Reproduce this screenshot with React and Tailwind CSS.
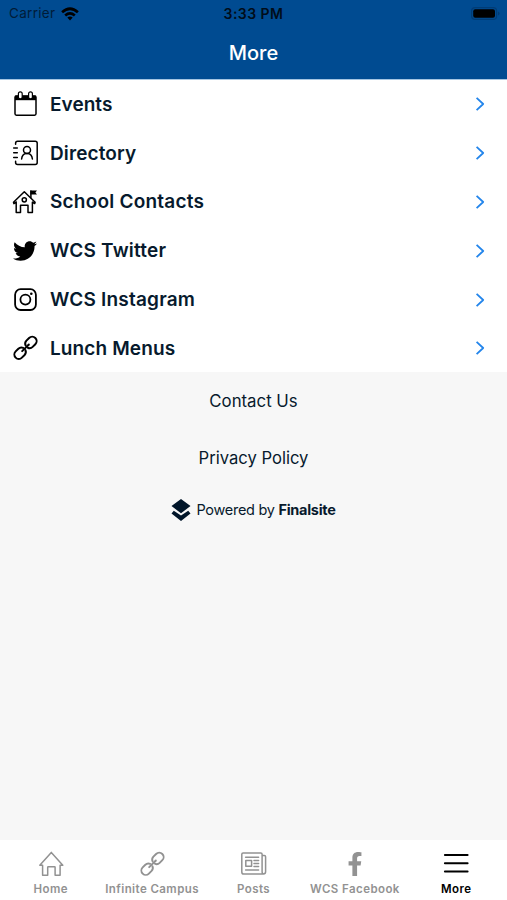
import React from "react";
import { FaTwitter, FaFacebookF } from "react-icons/fa";

const stroke = { fill: "none", stroke: "currentColor", strokeLinecap: "round", strokeLinejoin: "round" };

function CalendarIcon() {
  return (
    <svg className="h-6 w-6 overflow-visible" viewBox="0 0 24 24" {...stroke} strokeWidth="1.5">
      <path d="M2 3.6h21v4.6H2z" fill="currentColor" stroke="none" />
      <rect x="2" y="3.9" width="21" height="19.3" rx="1.4" />
      <rect x="5.4" y="-.2" width="3.8" height="7" rx="1.9" fill="white" strokeWidth="1.2" />
      <rect x="15.6" y="-.2" width="3.8" height="7" rx="1.9" fill="white" strokeWidth="1.2" />
    </svg>
  );
}

function DirectoryIcon() {
  return (
    <svg className="h-6 w-6 overflow-visible" viewBox="0 0 24 24" {...stroke} strokeWidth="1.5">
      <path d="M2.6 3.3V2.2Q2.6.2 4.6.2H22.2Q24.2.2 24.2 2.2V21.4Q24.2 23.4 22.2 23.4H4.6Q2.6 23.4 2.6 21.4V20.3" />
      <path d="M.7 7.1H4.3M.7 11.8H4.3M.7 16.5H4.3" />
      <circle cx="14" cy="9" r="3.5" />
      <path d="M8.6 18c.4-3.5 2-5.1 4.2-5.6h2.4c2.2.5 3.8 2.1 4.2 5.6" />
    </svg>
  );
}

function SchoolIcon() {
  return (
    <svg className="h-6 w-6 overflow-visible" viewBox="0 0 24 24" {...stroke} strokeWidth="1.5">
      <path d="M3.2 12.1.9 13.6.5 12.2 11.3 1.8 22.1 12.2 21.7 13.6 19.4 12.1V22.6H15V15.2H7.5V22.6H3.2V12.1" />
      <path d="M17.9 7.6V1" />
      <circle cx="11.3" cy="9.8" r="2.1" />
      <path d="M17.4.6H24L22.4 2.6 24 4.6H17.4z" fill="currentColor" stroke="none" />
    </svg>
  );
}

function InstagramIcon() {
  return (
    <svg className="h-6 w-6 overflow-visible" viewBox="0 0 24 24" {...stroke} strokeWidth="1.8">
      <rect x="2.1" y="1.2" width="20.8" height="20.8" rx="5.5" />
      <circle cx="12.4" cy="11.6" r="5" />
      <circle cx="18.3" cy="5.8" r="1.3" fill="currentColor" stroke="none" />
    </svg>
  );
}

function LinkIcon({ weight = 2 }) {
  return (
    <svg className="h-6 w-6 overflow-visible" viewBox="0 0 24 24" {...stroke} strokeWidth={weight}>
      <g transform="translate(.5 -.2) rotate(-45 12 12)">
        <path d="M10.3 13.6A4.4 4.4 0 0 1 6.3 16.4H2.5a4.4 4.4 0 0 1 0-8.8H6.3A4.4 4.4 0 0 1 10.3 10.4" />
        <path d="M13.7 10.4A4.4 4.4 0 0 1 17.7 7.6h3.8a4.4 4.4 0 0 1 0 8.8H17.7a4.4 4.4 0 0 1-4-2.8" />
        <path d="M7.3 12h9.4" />
      </g>
    </svg>
  );
}

function HomeIcon() {
  return (
    <svg className="h-6 w-6 overflow-visible" viewBox="0 0 24 24" {...stroke} strokeWidth="1.5">
      <path d="M3.6 13.2H.8L12.3.4 23.8 13.2H21.1V23.2H16.1V15.2Q16.1 14.7 15.6 14.7H9.2Q8.7 14.7 8.7 15.2V23.2H3.6z" />
    </svg>
  );
}

function PostsIcon() {
  return (
    <svg className="h-6 w-6 overflow-visible" viewBox="0 0 24 24" {...stroke} strokeWidth="1.5">
      <path d="M21.1 3.4V2.3Q21.1 1 19.8 1H2.1Q.8 1 .8 2.3V19.9Q.8 22 2.9 22H22.4Q24.6 22 24.6 19.8V4.7Q24.6 3.4 23.3 3.4H21.1V19.8Q21.1 22 22.6 22" />
      <rect x="4.8" y="8.6" width="5.8" height="5.6" />
      <path d="M4.6 5.2H17.6M13 8.5H17.6M13 11.5H17.6M13 14.5H17.6M4.6 17.9H17.6" />
    </svg>
  );
}

function MenuIcon() {
  return (
    <svg className="h-6 w-6 overflow-visible" viewBox="0 0 24 24" {...stroke} strokeWidth="2">
      <path d="M.9 3H23.6M.9 11.3H23.6M.9 19.6H23.6" />
    </svg>
  );
}

const rows = [
  { label: "Events", icon: <CalendarIcon />, track: "tracking-[0.05px]" },
  { label: "Directory", icon: <DirectoryIcon />, track: "tracking-[0.12px]" },
  { label: "School Contacts", icon: <SchoolIcon />, track: "tracking-[0.22px]" },
  { label: "WCS Twitter", icon: <FaTwitter className="h-6 w-6" />, track: "tracking-[0.22px]" },
  { label: "WCS Instagram", icon: <InstagramIcon />, track: "tracking-[0.2px]" },
  { label: "Lunch Menus", icon: <LinkIcon />, track: "tracking-[0.12px]" },
];

const tabs = [
  { label: "Home", icon: <HomeIcon /> },
  { label: "Infinite Campus", icon: <LinkIcon weight={1.9} /> },
  { label: "Posts", icon: <PostsIcon /> },
  { label: "WCS Facebook", icon: <FaFacebookF className="h-6 w-6" /> },
  { label: "More", icon: <MenuIcon />, active: true },
];

export default function App() {
  return (
    <div className="flex h-[900px] w-[507px] flex-col overflow-hidden bg-[#f7f7f7] font-['Inter',sans-serif] text-[#071a2d]">
      <header className="h-[79px] shrink-0 bg-[#004b91]">
        <div className="grid h-[27px] grid-cols-3 items-center text-[13.5px] leading-none text-black">
          <div className="flex items-center gap-[6px] pl-[9px] text-[#001c38]">
            <span className="tracking-[0.3px]">Carrier</span>
            <svg className="h-[14px] w-[18px] text-black" viewBox="0 0 18 14" fill="none" stroke="currentColor" strokeWidth="2.7">
              <path d="M1.1 5.2Q9-1.7 16.9 5.2M4.2 8.5Q9 4.3 13.8 8.5" />
              <path d="M6.3 10.6Q9 8.4 11.7 10.6L9 13.5z" fill="currentColor" stroke="none" />
            </svg>
          </div>
          <span className="pt-px text-center text-[14px] font-semibold tracking-[0.45px] text-[#000d1a]">3:33 PM</span>
          <div className="flex justify-end pr-[7px]">
            <svg className="h-[13px] w-[29px]" viewBox="0 0 29 13">
              <rect x=".6" y=".6" width="25" height="11.8" rx="3.5" fill="none" stroke="#003c76" strokeWidth="1.2" />
              <rect x="2.2" y="2.2" width="21.8" height="8.6" rx="2" fill="black" />
              <path d="M27 4.4Q28.6 5 28.6 6.5T27 8.6z" fill="#003c76" />
            </svg>
          </div>
        </div>
        <h1 className="flex h-[51px] items-center justify-center text-[20px] font-medium text-white">More</h1>
      </header>
      <div className="h-px shrink-0 bg-[#a5c5e2]" />

      <ul className="h-[292px] shrink-0 bg-white">
        {rows.map((r) => (
          <li key={r.label} className="flex h-[48.8px] items-center pr-[21px] pl-[13px]">
            <span className="flex w-[37px] text-black">{r.icon}</span>
            <span className={"grow pt-[1.4px] text-[19px] font-semibold " + r.track}>{r.label}</span>
            <svg className="h-4 w-3" viewBox="0 0 12 16" fill="none" stroke="#2385eb" strokeWidth="1.8" strokeLinejoin="round">
              <path d="M2.6 1.8 9.2 8 2.6 14.2" />
            </svg>
          </li>
        ))}
      </ul>

      <main className="flex grow flex-col items-center pt-[15px]">
        <a className="h-[28px] text-[16.8px] leading-[28px]">Contact Us</a>
        <a className="mt-[29px] h-[28px] text-[16.6px] leading-[28px]">Privacy Policy</a>
        <div className="mt-[26px] flex h-[24px] items-center">
          <svg className="mr-[5px] h-[22px] w-[20px]" viewBox="0 0 20 22" fill="#001529">
            <path d="M10 0 19.5 7.1 10 14.2.5 7.1zM2.8 11.8 10 16.4 17.2 11.8 19.5 14.6 10 21.9.5 14.6z" />
          </svg>
          <span className="text-[14.5px] tracking-[-0.28px] whitespace-pre">Powered by <b className="font-bold">Finalsite</b></span>
        </div>
      </main>

      <nav className="grid h-[60px] shrink-0 grid-cols-5 bg-white">
        {tabs.map((t) => (
          <div key={t.label} className={"flex flex-col items-center pt-[12px] " + (t.active ? "text-black" : "text-[#929292]")}>
            {t.icon}
            <span className="mt-[5px] text-[11.5px] leading-[16px] font-semibold tracking-[0.42px] whitespace-nowrap">{t.label}</span>
          </div>
        ))}
      </nav>
    </div>
  );
}
